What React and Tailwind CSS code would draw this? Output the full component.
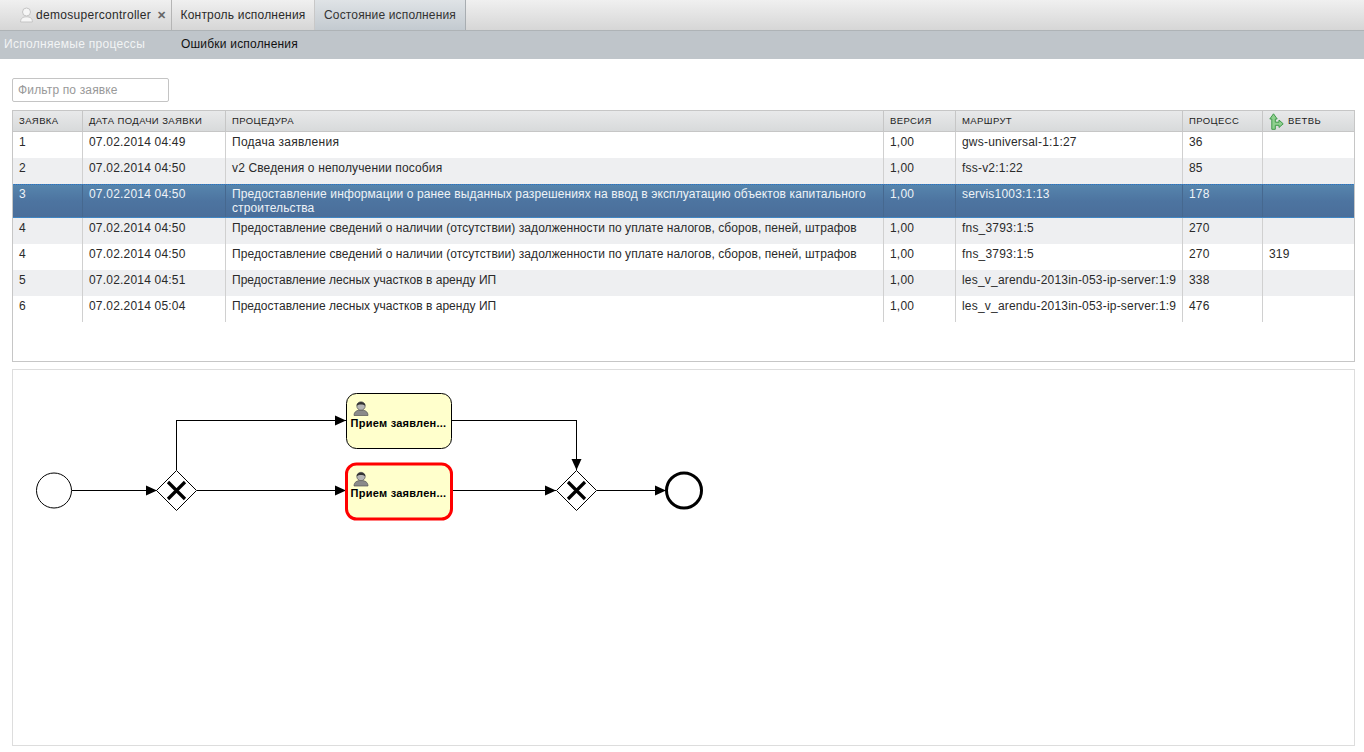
const cols = ["w-[70px] tracking-[0.2px]", "w-[143px] tracking-[0.2px]", "w-[658px]", "w-[72px] tracking-[0.2px]", "w-[227px] tracking-[0.2px]", "w-[80px] tracking-[0.2px]", "flex-1 tracking-[0.2px]"];
const procTrack = ["tracking-[0.26px]", "tracking-[0.14px]", "tracking-[0.12px]", "tracking-[0.06px]", "tracking-[0.06px]", "tracking-[0.03px]", "tracking-[0.03px]"];
const headCols = ["w-[70px]", "w-[143px]", "w-[658px]", "w-[72px]", "w-[227px]", "w-[80px]", "flex-1"];
const heads = ["ЗАЯВКА", "ДАТА ПОДАЧИ ЗАЯВКИ", "ПРОЦЕДУРА", "ВЕРСИЯ", "МАРШРУТ", "ПРОЦЕСС", "ВЕТВЬ"];
const p1 = "Предоставление сведений о наличии (отсутствии) задолженности по уплате налогов, сборов, пеней, штрафов";
const p2 = "Предоставление лесных участков в аренду ИП";
const rows = [
  ["1", "07.02.2014 04:49", "Подача заявления", "1,00", "gws-universal-1:1:27", "36", ""],
  ["2", "07.02.2014 04:50", "v2 Сведения о неполучении пособия", "1,00", "fss-v2:1:22", "85", ""],
  ["3", "07.02.2014 04:50", "Предоставление информации о ранее выданных разрешениях на ввод в эксплуатацию объектов капитального строительства", "1,00", "servis1003:1:13", "178", ""],
  ["4", "07.02.2014 04:50", p1, "1,00", "fns_3793:1:5", "270", ""],
  ["4", "07.02.2014 04:50", p1, "1,00", "fns_3793:1:5", "270", "319"],
  ["5", "07.02.2014 04:51", p2, "1,00", "les_v_arendu-2013in-053-ip-server:1:9", "338", ""],
  ["6", "07.02.2014 05:04", p2, "1,00", "les_v_arendu-2013in-053-ip-server:1:9", "476", ""],
];

function Branch() {
  return (
    <svg width="15" height="17" viewBox="0 0 15 17" className="mr-[4px] shrink-0">
      <path d="M4.5 0.8 L8.2 6 L6.3 6 L6.3 9.2 L10 9.2 L10 7 L14.2 10.8 L10 14.5 L10 12.3 L6.3 12.3 L6.3 16.3 L2.8 16.3 L2.8 6 L0.8 6 Z" fill="#8fd08f" stroke="#3f9a4a" strokeWidth="1" strokeLinejoin="round" />
    </svg>
  );
}

function Task({ y, red }) {
  const x = 346.5;
  return (
    <g>
      <rect x={x} y={y} width="105" height="55" rx="10" fill="#ffffcc" stroke={red ? "#ff0000" : "#000"} strokeWidth={red ? 3 : 1} />
      <g transform={`translate(${x + 7} ${y + 7})`}>
        <path d="M0.5 15 C0.5 11 3.5 9.5 7.5 9.5 C11.5 9.5 14.5 11 14.5 15 Z" fill="#8a8a8a" stroke="#555" strokeWidth="0.7" />
        <circle cx="7.5" cy="5.5" r="4.2" fill="#b5b5b5" stroke="#555" strokeWidth="0.7" />
        <path d="M3.2 5.2 C3 0.4 12 0.4 11.8 5.2 C9.6 3.6 5.4 3.6 3.2 5.2 Z" fill="#333" />
      </g>
      <text x={x + 52} y={y + 33} textAnchor="middle" fontFamily="'Liberation Sans', sans-serif" fontWeight="700" fontSize="11" letterSpacing="0.25">Прием заявлен...</text>
    </g>
  );
}

function Gateway({ cx, cy }) {
  return (
    <g>
      <path d={`M${cx} ${cy - 20} L${cx + 20} ${cy} L${cx} ${cy + 20} L${cx - 20} ${cy} Z`} fill="#fff" stroke="#000" strokeWidth="1" />
      <path d={`M${cx - 8.5} ${cy - 8.5} L${cx + 8.5} ${cy + 8.5} M${cx + 8.5} ${cy - 8.5} L${cx - 8.5} ${cy + 8.5}`} stroke="#000" strokeWidth="3.2" fill="none" />
    </g>
  );
}

function ArrowR({ x, y }) {
  return <path d={`M${x} ${y} L${x - 11} ${y - 5} L${x - 11} ${y + 5} Z`} fill="#000" />;
}

function Diagram() {
  return (
    <svg width="1341" height="375" viewBox="13 370 1341 375" className="block">
      <g stroke="#000" strokeWidth="1" fill="none" shapeRendering="crispEdges">
        <path d="M72 490.5 H157" />
        <path d="M176.5 470 V420.5 H346" />
        <path d="M197 490.5 H346" />
        <path d="M452 420.5 H576.5 V470" />
        <path d="M453 490.5 H556" />
        <path d="M597 490.5 H666" />
      </g>
      <ArrowR x={157} y={490.5} />
      <ArrowR x={346} y={420.5} />
      <ArrowR x={346} y={490.5} />
      <ArrowR x={556} y={490.5} />
      <ArrowR x={666} y={490.5} />
      <path d="M576.5 470 L571.5 459 L581.5 459 Z" fill="#000" />
      <circle cx="54" cy="490.5" r="17.5" fill="#fff" stroke="#000" strokeWidth="1" />
      <Gateway cx={176.5} cy={490.5} />
      <Gateway cx={576.5} cy={490.5} />
      <circle cx="684" cy="490.5" r="17.5" fill="#fff" stroke="#000" strokeWidth="3" />
      <Task y={393.5} />
      <Task y={464} red />
    </svg>
  );
}

export default function App() {
  return (
    <div className="w-[1364px] h-[752px] overflow-hidden bg-white text-[12px] leading-[14px] text-[#2a2a2a] font-['Liberation_Sans',sans-serif]">
      <div className="h-[31px] flex bg-gradient-to-b from-[#f0f0f0] to-[#d6d6d6] border-b border-[#aeb3b6] pl-[4px]">
        <div className="w-[168px] flex items-center border-r border-[#b5b5b5] pl-[16px] tracking-[0.3px]">
          <svg width="13" height="16" viewBox="0 0 13 16" className="mr-[3px] shrink-0">
            <circle cx="6.5" cy="5" r="4" fill="#f6f6f6" stroke="#c4c4c4" />
            <path d="M0.6 15 C0.6 11 3 9.8 6.5 9.8 C10 9.8 12.4 11 12.4 15 Z" fill="#f6f6f6" stroke="#c4c4c4" />
          </svg>
          <span>demosupercontroller</span>
          <span className="ml-[6px] text-[#666] font-bold text-[11px] tracking-normal">✕</span>
        </div>
        <div className="w-[143px] flex items-center justify-center border-r border-[#c8c8c8] tracking-[0.2px]">Контроль исполнения</div>
        <div className="w-[151px] flex items-center justify-center bg-gradient-to-b from-[#dfe3e6] to-[#c3cad0] border-r border-[#a8adb1] text-[#333] tracking-[0.15px]">Состояние исполнения</div>
      </div>
      <div className="h-[28px] flex items-center bg-[#bfc5ca] pl-[4px] pb-[2px]">
        <span className="w-[177px] text-[#f2f4f5] tracking-[0.3px]">Исполняемые процессы</span>
        <span className="text-[#111] tracking-[0.2px]">Ошибки исполнения</span>
      </div>

      <div className="px-[12px] pt-[19px]">
        <input
          placeholder="Фильтр по заявке"
          className="block w-[157px] h-[24px] bg-white border border-[#c4c4c4] rounded-[2px] px-[5px] text-[12px] tracking-[0.15px] placeholder:text-[#999] outline-none"
        />
        <div className="mt-[8px] w-[1343px] h-[252px] border border-[#c6c6c6]">
          <div className="flex h-[21px] bg-gradient-to-b from-[#e8e9ea] to-[#d8dadb] border-b border-[#c6c6c6] text-[9.5px] tracking-[0.4px] text-[#222]">
            {heads.map((h, i) => (
              <div key={h} className={`${headCols[i]} flex items-center pl-[6px] ${i < 6 ? "border-r border-[#c6c6c6]" : ""}`}>
                {i === 6 && <Branch />}
                {h}
              </div>
            ))}
          </div>
          {rows.map((r, ri) => {
            const sel = ri === 2;
            const bg = sel
              ? "bg-gradient-to-b from-[#5685ad] via-[#4d74a0] to-[#4a6e9a] text-[#eef3f7] border-y border-dotted border-[#2f86d6] h-[34px]"
              : (ri === 3 || ri === 5 || ri === 1)
              ? "bg-[#eeeff1] h-[26px]"
              : "bg-white h-[26px]";
            return (
              <div key={ri} className={`flex ${bg}`}>
                {r.map((c, i) => (
                  <div
                    key={i}
                    className={`${cols[i]} ${i === 2 ? procTrack[ri] : ""} pl-[6px] pr-[6px] ${sel ? "pt-[2px]" : "pt-[3px]"} ${i < 6 ? (sel ? "border-r border-[#46688f]" : "border-r border-[#d0d0d0]") : ""} ${i === 4 ? "whitespace-nowrap" : ""}`}
                  >
                    {c}
                  </div>
                ))}
              </div>
            );
          })}
        </div>
        <div className="mt-[7px] w-[1343px] h-[377px] border border-[#dddddd]">
          <Diagram />
        </div>
      </div>
    </div>
  );
}
